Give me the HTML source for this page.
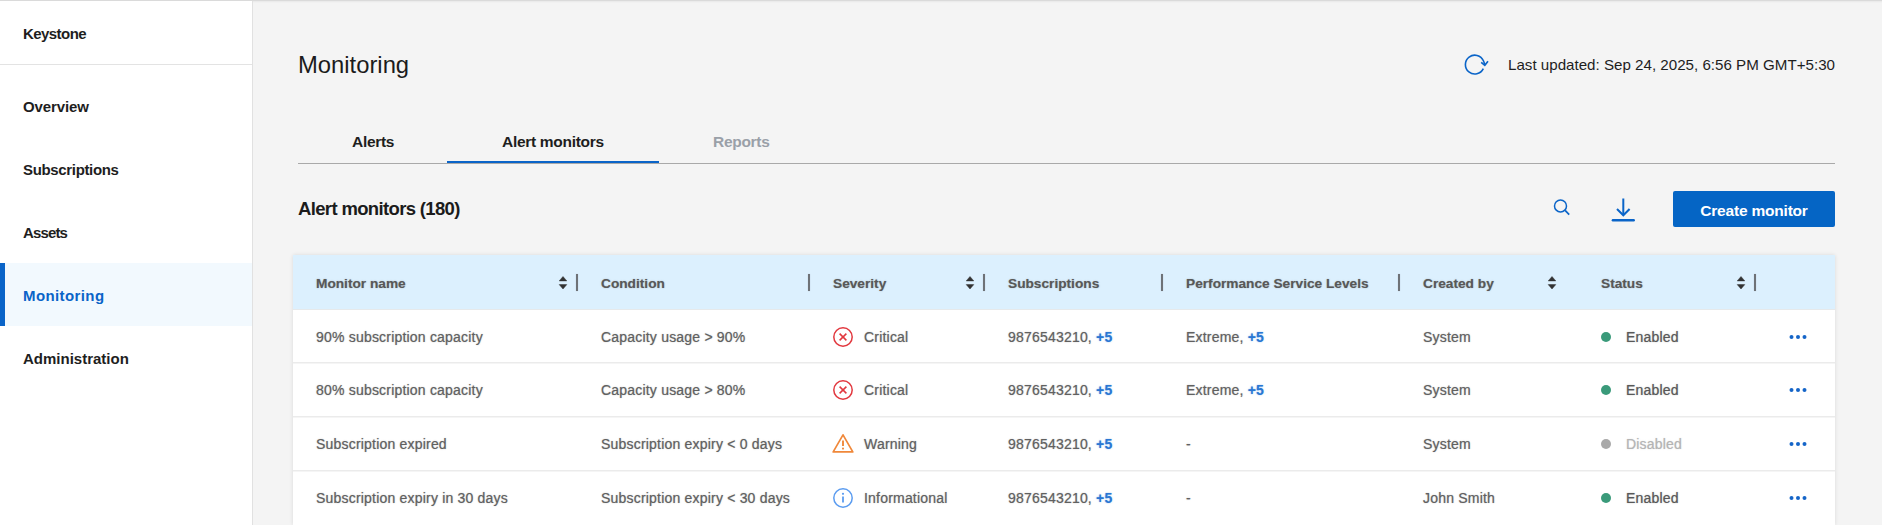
<!DOCTYPE html>
<html><head><meta charset="utf-8">
<style>
*{box-sizing:border-box;margin:0;padding:0}
html,body{width:1882px;height:525px;overflow:hidden}
body{position:relative;background:#f4f4f4;font-family:"Liberation Sans",sans-serif;color:#1b1b1b}
.a{position:absolute;white-space:nowrap;line-height:1}
#topline{position:absolute;left:0;top:0;width:1882px;height:1px;background:#dadada}
#side{position:absolute;left:0;top:1px;width:253px;height:524px;background:#fff;border-right:1px solid #e1e1e1}
#side .div{position:absolute;left:0;top:63px;width:252px;height:1px;background:#e3e3e3}
.nav{font-weight:bold;font-size:15px;letter-spacing:-0.15px;left:23px;color:#1e1e1e}
#sel{position:absolute;left:0;top:262px;width:252px;height:63px;background:#f2f9fe}
#selbar{position:absolute;left:0;top:262px;width:5px;height:63px;background:#0a64c8}
.tab{font-weight:bold;font-size:15.5px;letter-spacing:-0.3px;top:133.5px;color:#1e1e1e}
.hd{font-weight:bold;font-size:13.7px;color:#585858;text-shadow:0 0 1.2px rgba(88,88,88,.5)}
.td{font-size:14px;letter-spacing:0.2px;color:#606060;-webkit-text-stroke-width:0.1px;text-shadow:0 0 1.3px rgba(96,96,96,.45)}
.bl{color:#2a77d3;font-weight:bold;-webkit-text-stroke-width:0;text-shadow:0 0 1.4px rgba(42,119,211,.6)}
.vd{position:absolute;width:2px;height:17px;background:#6e7277;top:274px;box-shadow:0 0 1px rgba(110,114,119,.5)}
.row{position:absolute;left:293px;width:1542px;height:2px;background:linear-gradient(#ebebeb 0,#ebebeb 50%,#f5f5f5 50%)}
</style></head><body>
<div id="topline"></div>
<div style="position:absolute;left:253px;top:1px;width:1629px;height:1px;background:#ebebeb"></div>
<div style="position:absolute;left:253px;top:2px;width:1629px;height:1px;background:#f1f1f1"></div>
<div id="side">
  <div class="div"></div>
  <div id="sel"></div><div id="selbar"></div>
</div>
<div class="a nav" style="top:25.7px;letter-spacing:-0.56px">Keystone</div>
<div class="a nav" style="top:98.7px;letter-spacing:-0.11px">Overview</div>
<div class="a nav" style="top:161.7px;letter-spacing:-0.34px">Subscriptions</div>
<div class="a nav" style="top:224.7px;letter-spacing:-0.85px">Assets</div>
<div class="a nav" style="top:287.7px;color:#0a64c8;letter-spacing:0.4px">Monitoring</div>
<div class="a nav" style="top:350.7px;letter-spacing:0px">Administration</div>

<div class="a" style="left:298px;top:53.3px;font-size:23.8px;color:#1b1b1b">Monitoring</div>

<svg class="a" style="left:1463px;top:52px" width="26" height="26" viewBox="0 0 26 26">
  <path d="M20.3 16.6 A9.4 9.4 0 1 1 20.4 8.8 L21.8 12.2" fill="none" stroke="#0a64c8" stroke-width="1.6"/>
  <path d="M18.2 10.4 L21.8 13.3 L25 9.3" fill="none" stroke="#0a64c8" stroke-width="1.7"/>
</svg>
<div class="a" style="right:47px;top:57.2px;font-size:15.15px;color:#1e1e1e">Last updated: Sep 24, 2025, 6:56 PM GMT+5:30</div>

<div class="a tab" style="left:352px">Alerts</div>
<div class="a tab" style="left:502px">Alert monitors</div>
<div class="a tab" style="left:713px;color:#9aa0a8">Reports</div>
<div style="position:absolute;left:298px;top:163px;width:1537px;height:1px;background:#a9a9a9"></div>
<div style="position:absolute;left:447px;top:161px;width:212px;height:2px;background:#0a64c8"></div>

<div class="a" style="left:298px;top:199.5px;font-size:18.5px;letter-spacing:-0.65px;font-weight:bold;color:#1b1b1b">Alert monitors (180)</div>

<svg class="a" style="left:1550px;top:196px" width="24" height="24" viewBox="0 0 24 24">
  <circle cx="10.5" cy="9.9" r="6.0" fill="none" stroke="#0a64c8" stroke-width="1.5"/>
  <path d="M15.1 14.4 L19.2 18.6" stroke="#0a64c8" stroke-width="1.7"/>
</svg>
<svg class="a" style="left:1608px;top:196px" width="30" height="28" viewBox="0 0 30 28">
  <path d="M15.3 2.5 V19" stroke="#0a64c8" stroke-width="2"/>
  <path d="M9 13 L15.3 19.3 L21.6 13" fill="none" stroke="#0a64c8" stroke-width="2"/>
  <path d="M4.9 24.2 H25.7" stroke="#0a64c8" stroke-width="2.5" stroke-linecap="round"/>
</svg>
<div style="position:absolute;left:1673px;top:191px;width:162px;height:36px;background:#0565c5;border-radius:2px"></div>
<div class="a" style="left:1673px;width:162px;text-align:center;top:203px;font-size:15.5px;letter-spacing:-0.2px;font-weight:bold;color:#fff">Create monitor</div>

<!-- table -->
<div id="tbl" style="position:absolute;left:0;top:0;width:1882px;height:525px">
<div style="position:absolute;left:293px;top:255px;width:1542px;height:270px;background:#fff;box-shadow:0 0 4px rgba(0,0,0,0.11)"></div>
<div style="position:absolute;left:293px;top:255px;width:1542px;height:54px;background:#dcf0fe"></div>
<div style="position:absolute;left:293px;top:309px;width:1542px;height:1px;background:#e6e9eb"></div>

<div class="a hd" style="left:316px;top:276.5px">Monitor name</div>
<div class="a hd" style="left:601px;top:276.5px">Condition</div>
<div class="a hd" style="left:833px;top:276.5px">Severity</div>
<div class="a hd" style="left:1008px;top:276.5px">Subscriptions</div>
<div class="a hd" style="left:1186px;top:276.5px">Performance Service Levels</div>
<div class="a hd" style="left:1423px;top:276.5px">Created by</div>
<div class="a hd" style="left:1601px;top:276.5px">Status</div>

<div class="vd" style="left:576px"></div>
<div class="vd" style="left:808px"></div>
<div class="vd" style="left:983px"></div>
<div class="vd" style="left:1161px"></div>
<div class="vd" style="left:1398px"></div>
<div class="vd" style="left:1754px"></div>

<svg class="a" style="left:558px;top:274.5px" width="10" height="16" viewBox="0 0 10 16"><path d="M1.2 5.9 L5 1.5 L8.8 5.9Z M1.2 9.6 L5 14 L8.8 9.6Z" fill="#333" stroke="#333" stroke-width="0.5" stroke-linejoin="round"/></svg>
<svg class="a" style="left:965px;top:274.5px" width="10" height="16" viewBox="0 0 10 16"><path d="M1.2 5.9 L5 1.5 L8.8 5.9Z M1.2 9.6 L5 14 L8.8 9.6Z" fill="#333" stroke="#333" stroke-width="0.5" stroke-linejoin="round"/></svg>
<svg class="a" style="left:1547px;top:274.5px" width="10" height="16" viewBox="0 0 10 16"><path d="M1.2 5.9 L5 1.5 L8.8 5.9Z M1.2 9.6 L5 14 L8.8 9.6Z" fill="#333" stroke="#333" stroke-width="0.5" stroke-linejoin="round"/></svg>
<svg class="a" style="left:1736px;top:274.5px" width="10" height="16" viewBox="0 0 10 16"><path d="M1.2 5.9 L5 1.5 L8.8 5.9Z M1.2 9.6 L5 14 L8.8 9.6Z" fill="#333" stroke="#333" stroke-width="0.5" stroke-linejoin="round"/></svg>

<div class="row" style="top:362px"></div>
<div class="row" style="top:416px"></div>
<div class="row" style="top:470px"></div>

<!-- ROWS -->
<div class="a td" style="left:316px;top:329.6px">90% subscription capacity</div>
<div class="a td" style="left:601px;top:329.6px">Capacity usage &gt; 90%</div>
<svg class="a" style="left:833px;top:326.5px" width="20" height="20" viewBox="0 0 20 20"><circle cx="10" cy="10" r="9.2" fill="none" stroke="#e2383f" stroke-width="1.5"/><path d="M6.6 6.6 L13.4 13.4 M13.4 6.6 L6.6 13.4" stroke="#e2383f" stroke-width="1.5"/></svg>
<div class="a td" style="left:864px;top:329.6px">Critical</div>
<div class="a td" style="left:1008px;top:329.6px">9876543210, <span class="bl">+5</span></div>
<div class="a td" style="left:1186px;top:329.6px">Extreme, <span class="bl">+5</span></div>
<div class="a td" style="left:1423px;top:329.6px">System</div>
<div style="position:absolute;left:1601px;top:331.5px;width:10px;height:10px;border-radius:50%;background:#3a9a7a"></div>
<div class="a td" style="left:1626px;top:329.6px;color:#585858;text-shadow:0 0 1.3px #58585880">Enabled</div>
<svg class="a" style="left:1788px;top:333.5px" width="20" height="6" viewBox="0 0 20 6"><circle cx="3.5" cy="3" r="2" fill="#1565c8"/><circle cx="10" cy="3" r="2" fill="#1565c8"/><circle cx="16.5" cy="3" r="2" fill="#1565c8"/></svg>
<div class="a td" style="left:316px;top:383.1px">80% subscription capacity</div>
<div class="a td" style="left:601px;top:383.1px">Capacity usage &gt; 80%</div>
<svg class="a" style="left:833px;top:380px" width="20" height="20" viewBox="0 0 20 20"><circle cx="10" cy="10" r="9.2" fill="none" stroke="#e2383f" stroke-width="1.5"/><path d="M6.6 6.6 L13.4 13.4 M13.4 6.6 L6.6 13.4" stroke="#e2383f" stroke-width="1.5"/></svg>
<div class="a td" style="left:864px;top:383.1px">Critical</div>
<div class="a td" style="left:1008px;top:383.1px">9876543210, <span class="bl">+5</span></div>
<div class="a td" style="left:1186px;top:383.1px">Extreme, <span class="bl">+5</span></div>
<div class="a td" style="left:1423px;top:383.1px">System</div>
<div style="position:absolute;left:1601px;top:385px;width:10px;height:10px;border-radius:50%;background:#3a9a7a"></div>
<div class="a td" style="left:1626px;top:383.1px;color:#585858;text-shadow:0 0 1.3px #58585880">Enabled</div>
<svg class="a" style="left:1788px;top:387px" width="20" height="6" viewBox="0 0 20 6"><circle cx="3.5" cy="3" r="2" fill="#1565c8"/><circle cx="10" cy="3" r="2" fill="#1565c8"/><circle cx="16.5" cy="3" r="2" fill="#1565c8"/></svg>
<div class="a td" style="left:316px;top:436.6px">Subscription expired</div>
<div class="a td" style="left:601px;top:436.6px">Subscription expiry &lt; 0 days</div>
<svg class="a" style="left:832px;top:432.5px" width="22" height="21" viewBox="0 0 22 21"><path d="M11 1.8 L20.8 18.9 H1.2 Z" fill="none" stroke="#f0883a" stroke-width="1.7" stroke-linejoin="round"/><path d="M11 7.4 V13" stroke="#f0883a" stroke-width="1.9"/><circle cx="11" cy="15.6" r="1.05" fill="#f0883a"/></svg>
<div class="a td" style="left:864px;top:436.6px">Warning</div>
<div class="a td" style="left:1008px;top:436.6px">9876543210, <span class="bl">+5</span></div>
<div class="a td" style="left:1186px;top:436.6px">-</div>
<div class="a td" style="left:1423px;top:436.6px">System</div>
<div style="position:absolute;left:1601px;top:438.5px;width:10px;height:10px;border-radius:50%;background:#a9a9a9"></div>
<div class="a td" style="left:1626px;top:436.6px;color:#b4b4b4;text-shadow:0 0 1.3px #b4b4b480">Disabled</div>
<svg class="a" style="left:1788px;top:440.5px" width="20" height="6" viewBox="0 0 20 6"><circle cx="3.5" cy="3" r="2" fill="#1565c8"/><circle cx="10" cy="3" r="2" fill="#1565c8"/><circle cx="16.5" cy="3" r="2" fill="#1565c8"/></svg>
<div class="a td" style="left:316px;top:490.6px">Subscription expiry in 30 days</div>
<div class="a td" style="left:601px;top:490.6px">Subscription expiry &lt; 30 days</div>
<svg class="a" style="left:833px;top:487.5px" width="20" height="20" viewBox="0 0 20 20"><circle cx="10" cy="10" r="9.2" fill="none" stroke="#5b9cf0" stroke-width="1.5"/><path d="M10 8.4 V14.6" stroke="#5b9cf0" stroke-width="1.8"/><circle cx="10" cy="5.8" r="1.1" fill="#5b9cf0"/></svg>
<div class="a td" style="left:864px;top:490.6px">Informational</div>
<div class="a td" style="left:1008px;top:490.6px">9876543210, <span class="bl">+5</span></div>
<div class="a td" style="left:1186px;top:490.6px">-</div>
<div class="a td" style="left:1423px;top:490.6px">John Smith</div>
<div style="position:absolute;left:1601px;top:492.5px;width:10px;height:10px;border-radius:50%;background:#3a9a7a"></div>
<div class="a td" style="left:1626px;top:490.6px;color:#585858;text-shadow:0 0 1.3px #58585880">Enabled</div>
<svg class="a" style="left:1788px;top:494.5px" width="20" height="6" viewBox="0 0 20 6"><circle cx="3.5" cy="3" r="2" fill="#1565c8"/><circle cx="10" cy="3" r="2" fill="#1565c8"/><circle cx="16.5" cy="3" r="2" fill="#1565c8"/></svg>
</div>
</body></html>
